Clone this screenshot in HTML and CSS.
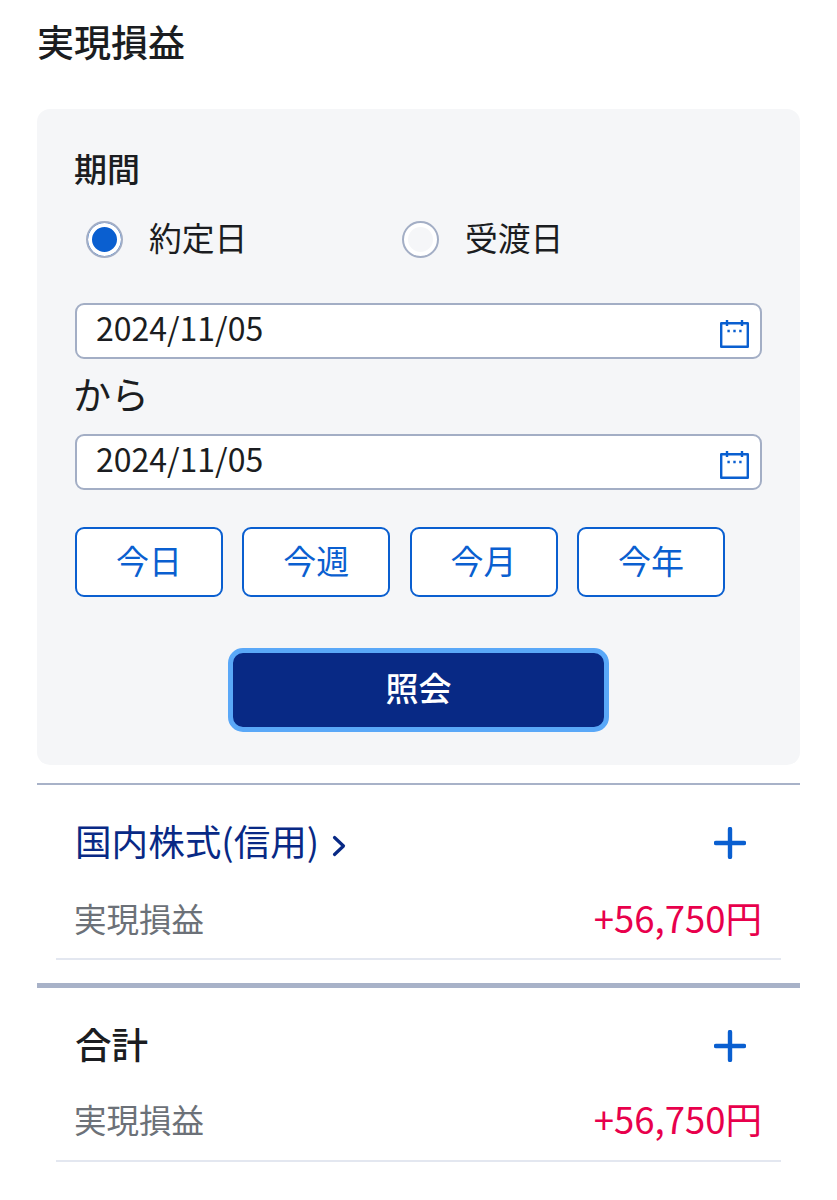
FILE: index.html
```html
<!DOCTYPE html>
<html lang="ja">
<head>
    <meta charset="UTF-8">
    <meta name="viewport" content="width=device-width, initial-scale=1.0">
    <title>実現損益</title>
    <link rel="stylesheet" href="styles.css">
</head>
<body>
    <div class="page">
        <h1 class="page-title">実現損益</h1>

        <div class="search-box">
            <div class="field-label">期間</div>
            <div class="radio-row">
                <label class="radio-item">
                    <span class="radio-mark checked"></span>
                    <span class="radio-text">約定日</span>
                </label>
                <label class="radio-item">
                    <span class="radio-mark"></span>
                    <span class="radio-text">受渡日</span>
                </label>
            </div>

            <div class="date-input">
                <span class="date-text">2024/11/05</span>
                <svg class="calendar-icon" viewBox="0 0 29 28" width="29" height="28">
                    <rect x="1.2" y="3.2" width="26.6" height="23.6" fill="none" stroke="#0a5fd0" stroke-width="2.4" stroke-linejoin="round"/>
                    <path d="M7 0v6M22 0v6" stroke="#0a5fd0" stroke-width="2.4"/>
                    <path d="M7.4 11h2.4M13.3 11h2.4M19.2 11h2.4" stroke="#0a5fd0" stroke-width="2.4"/>
                </svg>
            </div>
            <div class="date-sep">から</div>
            <div class="date-input">
                <span class="date-text">2024/11/05</span>
                <svg class="calendar-icon" viewBox="0 0 29 28" width="29" height="28">
                    <rect x="1.2" y="3.2" width="26.6" height="23.6" fill="none" stroke="#0a5fd0" stroke-width="2.4" stroke-linejoin="round"/>
                    <path d="M7 0v6M22 0v6" stroke="#0a5fd0" stroke-width="2.4"/>
                    <path d="M7.4 11h2.4M13.3 11h2.4M19.2 11h2.4" stroke="#0a5fd0" stroke-width="2.4"/>
                </svg>
            </div>

            <div class="quick-buttons">
                <button class="quick-btn">今日</button>
                <button class="quick-btn">今週</button>
                <button class="quick-btn">今月</button>
                <button class="quick-btn">今年</button>
            </div>

            <div class="submit-row">
                <button class="submit-btn">照会</button>
            </div>
        </div>

        <div class="result-block">
            <div class="result-head">
                <a class="result-title link">国内株式(信用)
                    <svg class="chevron" viewBox="0 0 14 22" width="14" height="22">
                        <path d="M2.5 2.5l9 8.5-9 8.5" fill="none" stroke="#082985" stroke-width="3.2" stroke-linecap="round" stroke-linejoin="round"/>
                    </svg>
                </a>
                <svg class="plus-icon" viewBox="0 0 32 32" width="32" height="32">
                    <path d="M16 2v28M2 16h28" stroke="#0a5fd0" stroke-width="4.4" stroke-linecap="round"/>
                </svg>
            </div>
            <div class="result-row">
                <span class="result-name">実現損益</span>
                <span class="result-value">+56,750円</span>
            </div>
        </div>

        <div class="result-block total">
            <div class="result-head">
                <span class="result-title">合計</span>
                <svg class="plus-icon" viewBox="0 0 32 32" width="32" height="32">
                    <path d="M16 2v28M2 16h28" stroke="#0a5fd0" stroke-width="4.4" stroke-linecap="round"/>
                </svg>
            </div>
            <div class="result-row">
                <span class="result-name">実現損益</span>
                <span class="result-value">+56,750円</span>
            </div>
        </div>
    </div>
</body>
</html>
```

FILE: styles.css
```css
* {
    box-sizing: border-box;
}

body {
    margin: 0;
    background-color: #fff;
    color: #1b1d21;
    font-family: "Noto Sans CJK JP", "Noto Sans", sans-serif;
}

.page {
    padding: 0 37px;
}

.page-title {
    margin: 0;
    padding-top: 16px;
    height: 109px;
    font-size: 37px;
    line-height: 50px;
    font-weight: 500;
}

.search-box {
    height: 656px;
    padding: 36px 38px 0;
    background-color: #f5f6f8;
    border-radius: 13px;
}

.field-label {
    margin-left: -1px;
    font-size: 33px;
    line-height: 46px;
    font-weight: 500;
}

.radio-row {
    display: flex;
    margin-top: 25px;
    padding-left: 11px;
    height: 46px;
}

.radio-item {
    display: flex;
    align-items: center;
    width: 316px;
    font-size: 32.8px;
    line-height: 46px;
}

.radio-text {
    padding-bottom: 4px;
}

.radio-mark {
    width: 37px;
    height: 37px;
    margin-right: 26px;
    border: 2.5px solid #a3aec5;
    border-radius: 50%;
    background-color: #f5f6f8;
    box-shadow: inset 0 0 0 4px #fff;
}

.radio-mark.checked {
    background-color: #0a5fd0;
}

.date-input {
    display: flex;
    align-items: center;
    justify-content: space-between;
    height: 56px;
    padding: 0 11px 0 19px;
    background-color: #fff;
    border: 2.5px solid #a3aec5;
    border-radius: 9px;
    font-size: 32px;
    line-height: 50px;
}

.radio-row + .date-input {
    margin-top: 41px;
}

.date-text {
    padding-bottom: 8px;
}

.calendar-icon {
    margin-top: 5px;
}

.date-sep {
    height: 75px;
    margin-left: -2px;
    font-size: 38px;
    line-height: 68px;
}

.quick-buttons {
    display: flex;
    gap: 19.3px;
    margin-top: 37px;
}

.quick-btn {
    width: 148px;
    height: 70px;
    padding: 0 0 4px;
    background-color: #fff;
    border: 2.5px solid #0a5fd0;
    border-radius: 9px;
    color: #0a5fd0;
    font-family: inherit;
    font-size: 33px;
}

.submit-row {
    display: flex;
    justify-content: center;
    margin-top: 51px;
}

.submit-btn {
    width: 381px;
    height: 84px;
    padding: 0 0 7px;
    background-color: #082985;
    border: 5px solid #5aa8f8;
    border-radius: 15px;
    color: #fff;
    font-family: inherit;
    font-size: 33px;
    font-weight: 500;
}

.result-block {
    margin-top: 18px;
    height: 176px;
    padding: 0 19px;
    border-top: 2px solid #a8b2c8;
}

.result-block.total {
    margin-top: 24px;
    height: 180px;
    border-top-width: 5px;
}

.result-head {
    display: flex;
    align-items: center;
    justify-content: space-between;
    height: 78px;
    margin-top: 19px;
    padding: 0 35px 0 19px;
}

.result-title {
    padding-bottom: 4px;
    font-size: 36.6px;
    line-height: 50px;
    font-weight: 500;
}

.result-title.link {
    color: #082985;
    font-weight: 400;
}

.chevron {
    margin-left: 5px;
    vertical-align: -1px;
}

.result-row {
    display: flex;
    align-items: center;
    justify-content: space-between;
    height: 78px;
    padding: 0 19px 6px;
    border-bottom: 2.5px solid #e3e7f0;
}

.total .result-row {
    height: 77px;
    padding-bottom: 8px;
}

.result-name {
    margin-left: -1px;
    color: #6c7178;
    font-size: 32.5px;
}

.result-value {
    color: #e8004c;
    font-size: 36.5px;
}
```
